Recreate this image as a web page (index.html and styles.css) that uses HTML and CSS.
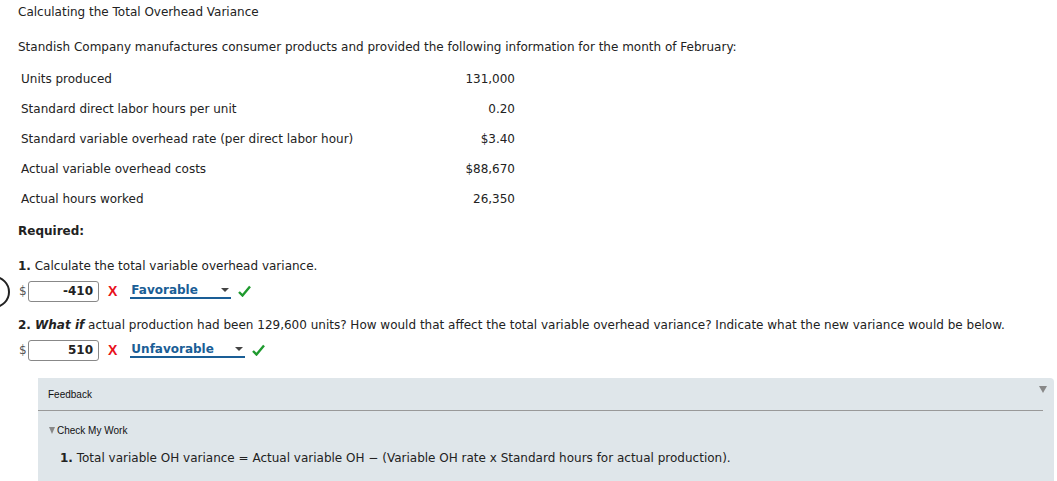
FILE: index.html
```html
<!DOCTYPE html>
<html lang="en">
<head>
    <meta charset="UTF-8">
    <title>Calculating the Total Overhead Variance</title>
    <link rel="stylesheet" href="styles.css">
</head>
<body>
    <div class="page">
        <div class="step-ring"></div>

        <p class="title">Calculating the Total Overhead Variance</p>

        <p class="intro">Standish Company manufactures consumer products and provided the following information for the month of February:</p>

        <table class="data">
            <tr><td class="label">Units produced</td><td class="value">131,000</td></tr>
            <tr><td class="label">Standard direct labor hours per unit</td><td class="value">0.20</td></tr>
            <tr><td class="label">Standard variable overhead rate (per direct labor hour)</td><td class="value">$3.40</td></tr>
            <tr><td class="label">Actual variable overhead costs</td><td class="value">$88,670</td></tr>
            <tr><td class="label">Actual hours worked</td><td class="value">26,350</td></tr>
        </table>

        <p class="required">Required:</p>

        <p class="question"><b>1.</b> Calculate the total variable overhead variance.</p>
        <div class="answer">
            <span class="dollar">$</span>
            <span class="num-box">-410</span>
            <span class="wrong">X</span>
            <span class="select">Favorable<span class="caret"></span></span>
            <svg class="right" width="13" height="12" viewBox="0 0 13 12"><path d="M1 7 L4.5 10.5 L12 1.5" fill="none" stroke="#1f9a2e" stroke-width="2.4"/></svg>
        </div>

        <p class="question q2"><b>2. <i>What if</i></b> actual production had been 129,600 units? How would that affect the total variable overhead variance? Indicate what the new variance would be below.</p>
        <div class="answer">
            <span class="dollar">$</span>
            <span class="num-box">510</span>
            <span class="wrong">X</span>
            <span class="select wide">Unfavorable<span class="caret"></span></span>
            <svg class="right" width="13" height="12" viewBox="0 0 13 12"><path d="M1 7 L4.5 10.5 L12 1.5" fill="none" stroke="#1f9a2e" stroke-width="2.4"/></svg>
        </div>

        <div class="feedback">
            <div class="feedback-head">
                <span>Feedback</span>
                <span class="fb-toggle"></span>
            </div>
            <div class="check-work"><span class="cw-tri"></span>Check My Work</div>
            <p class="fb-text"><b>1.</b> Total variable OH variance = Actual variable OH &minus; (Variable OH rate x Standard hours for actual production).</p>
        </div>
    </div>
</body>
</html>
```

FILE: styles.css
```css
body {
    margin: 0;
    font-family: "DejaVu Sans", Verdana, sans-serif;
    font-size: 12px;
    color: #222;
    background: #fff;
    overflow: hidden;
}

.page {
    position: relative;
    padding: 4px 0 0 18px;
}

p {
    margin: 0;
}

.title {
    line-height: 16px;
}

.intro {
    margin-top: 19px;
    line-height: 16px;
}

.data {
    border-collapse: collapse;
    margin-top: 9px;
    margin-left: 0;
}

.data td {
    height: 30px;
    padding: 0;
}

.data .label {
    padding-left: 3px;
    width: 420px;
}

.data .value {
    text-align: right;
    width: 74px;
}

.required {
    font-weight: bold;
    margin-top: 9px;
    line-height: 16px;
}

.question {
    margin-top: 19px;
    line-height: 16px;
}

.q2 {
    margin-top: 15px;
}

.answer {
    display: flex;
    align-items: center;
    height: 22px;
    margin-top: 6px;
}

.dollar {
    color: #555;
    width: 9px;
    margin-left: 1px;
}

.num-box {
    box-sizing: border-box;
    width: 71px;
    height: 21px;
    border: 1px solid #888;
    border-radius: 3px;
    text-align: right;
    padding: 2px 5px 0 0;
    font-weight: bold;
    color: #222;
}

.wrong {
    color: #e8101a;
    font-weight: bold;
    font-family: "Liberation Sans", Arial, sans-serif;
    font-size: 14px;
    margin-left: 9px;
}

.select {
    position: relative;
    box-sizing: border-box;
    width: 101px;
    margin-left: 13px;
    color: #1a5e96;
    font-weight: bold;
    border-bottom: 2px solid #1a5e96;
    line-height: 14px;
    padding-left: 1px;
}

.select.wide {
    width: 115px;
}

.caret {
    position: absolute;
    right: 2px;
    top: 5px;
    border-left: 4px solid transparent;
    border-right: 4px solid transparent;
    border-top: 4px solid #444;
}

.right {
    margin-left: 7px;
}

.step-ring {
    position: absolute;
    left: -22px;
    top: 276px;
    width: 28px;
    height: 28px;
    border: 2px solid #222;
    border-radius: 50%;
}

.feedback {
    margin: 17px 3px 0 20px;
    background: #dfe6ea;
    border-radius: 0 4px 0 0;
    padding: 0 0 20px 0;
    font-family: "Liberation Sans", Arial, sans-serif;
}

.feedback-head {
    display: flex;
    justify-content: space-between;
    align-items: center;
    height: 32px;
    margin-right: 11px;
    padding: 0 0 0 10px;
    font-size: 10px;
    color: #111;
    border-bottom: 1px solid #999;
}

.fb-toggle {
    border-left: 4px solid transparent;
    border-right: 4px solid transparent;
    border-top: 7px solid #888;
    margin-top: -10px;
    margin-right: -4px;
}

.check-work {
    font-size: 10px;
    color: #111;
    margin: 14px 0 0 11px;
    display: flex;
    align-items: center;
}

.cw-tri {
    border-left: 3px solid transparent;
    border-right: 3px solid transparent;
    border-top: 7px solid #888;
    margin-right: 2px;
}

.fb-text {
    font-family: "DejaVu Sans", Verdana, sans-serif;
    font-size: 12px;
    color: #222;
    margin: 14px 0 0 22px;
    line-height: 16px;
}
```
